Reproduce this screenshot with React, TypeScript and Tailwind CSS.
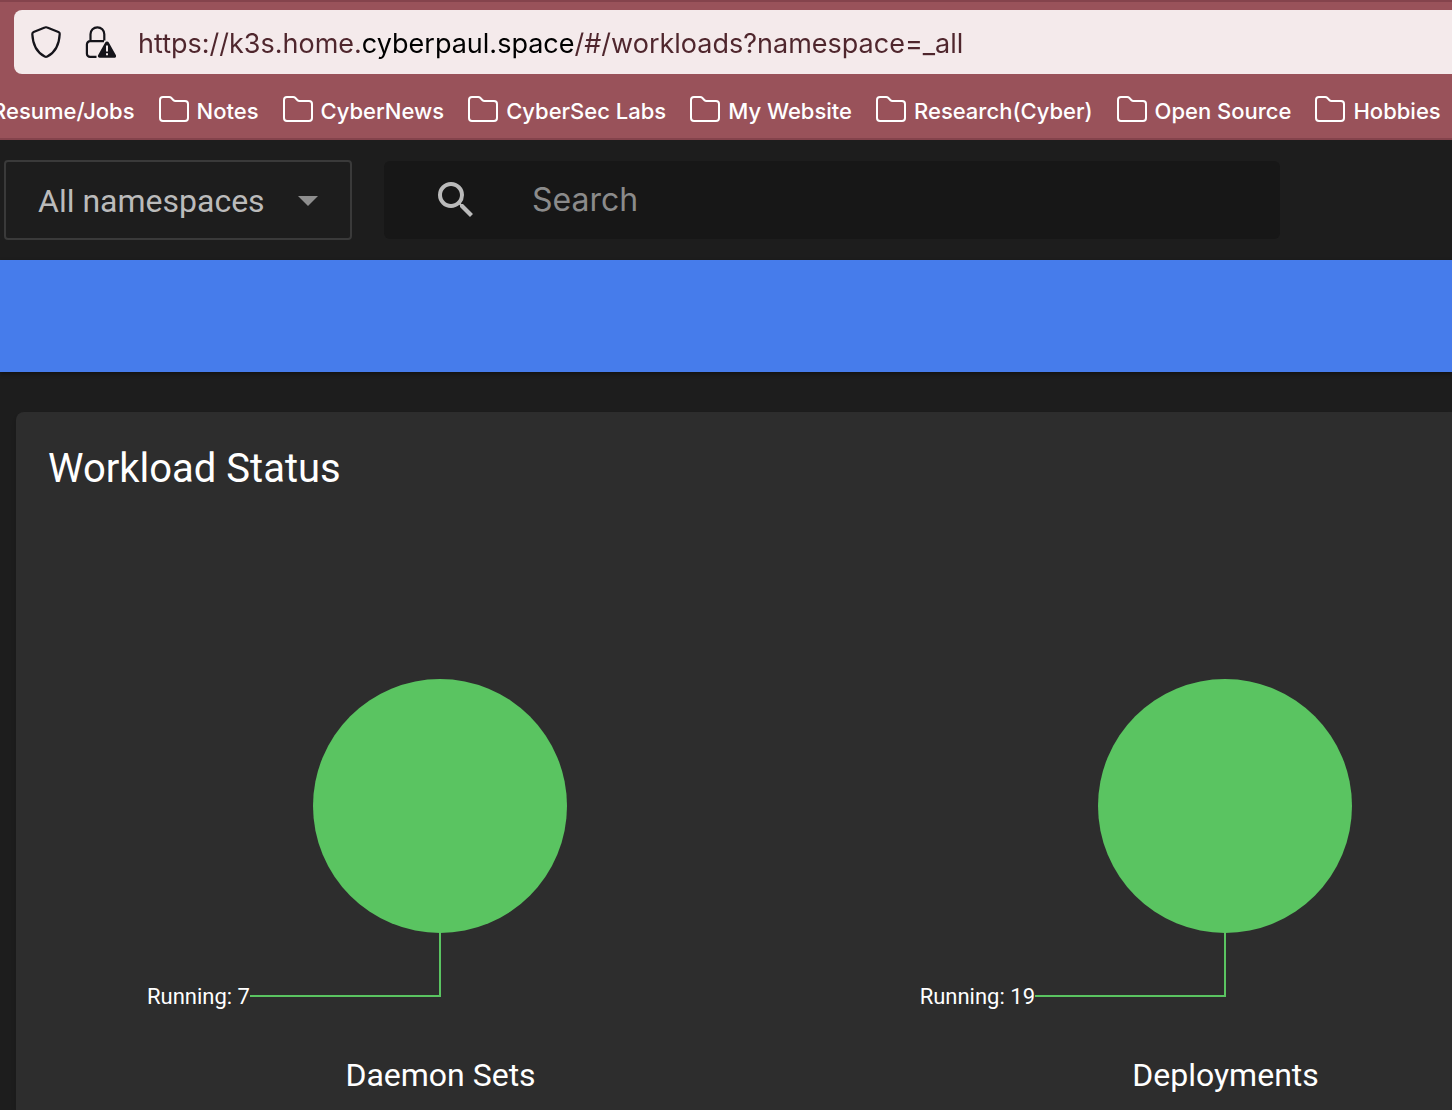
import React, { useState } from "react";

const URL_TEXT = "https://k3s.home.cyberpaul.space/#/workloads?namespace=_all";

const BOOKMARKS = [
  "Resume/Jobs",
  "Notes",
  "CyberNews",
  "CyberSec Labs",
  "My Website",
  "Research(Cyber)",
  "Open Source",
  "Hobbies",
];

const WORKLOADS = [
  { name: "Daemon Sets", running: 7 },
  { name: "Deployments", running: 19 },
];

function ShieldIcon() {
  return (
    <svg className="size-8" viewBox="0 0 32 32" fill="none" stroke="#15141a" strokeWidth="2.2" strokeLinejoin="round" aria-hidden="true">
      <path d="M14.800 1.500a3 3 0 0 1 2.400 0L28.400 6c1 .4 1.400 1.100 1.300 2.100C29.200 18.500 25 26.500 17.300 30.500c-.8.400-1.800.400-2.600 0C7 26.500 2.800 18.500 2.300 8.100c0-1 .4-1.700 1.300-2.100Z" />
    </svg>
  );
}

function LockWarningIcon() {
  return (
    <svg className="size-8" viewBox="0 0 32 32" fill="none" aria-hidden="true">
      <path d="M6.500 14.500V8.200a6.900 6.900 0 0 1 13.800 0v6.300M12.500 30.900H6.100a3.200 3.200 0 0 1-3.200-3.200v-9.300a3.200 3.200 0 0 1 3.200-3.200H20" stroke="#15141a" strokeWidth="2.200" />
      <path d="M23 15.500c.8 0 1.400.400 1.800 1.100l7 12.400c.8 1.400 0 2.700-1.500 2.700H15.700c-1.500 0-2.300-1.300-1.500-2.700l7-12.400c.4-.7 1-1.100 1.800-1.100Z" fill="#15141a" />
      <path d="M23 19.500v6M23 27.200v2" stroke="#f4eaeb" strokeWidth="2" />
    </svg>
  );
}

function FolderIcon() {
  return (
    <svg className="h-[26px] w-[30px] shrink-0" viewBox="0 0 30 26" fill="none" stroke="#ffffff" strokeWidth="2" strokeLinejoin="round" aria-hidden="true">
      <path d="M1 4a3 3 0 0 1 3-3h6.200c.8 0 1.500.300 2 .800L14.500 4.200c.5.500 1.100.800 1.900.800H26a3 3 0 0 1 3 3v14a3 3 0 0 1-3 3H4a3 3 0 0 1-3-3Z" />
    </svg>
  );
}

function WorkloadChart({ name, running }: { name: string; running: number }) {
  return (
    <figure className="flex w-[785px] shrink-0 flex-col items-center">
      <svg className="h-[491px] w-full" viewBox="0 0 785 491" role="img" aria-label={`${name}: ${running} running`}>
        <circle cx="392" cy="242" r="127" fill="#5ac461" />
        <path d="M392 368v64H202" fill="none" stroke="#5ac461" strokeWidth="2" />
        <text x="202" y="440" textAnchor="end" fill="#ffffff" fontSize="22">
          {`Running: ${running}`}
        </text>
      </svg>
      <figcaption className="text-[32px] leading-10">{name}</figcaption>
    </figure>
  );
}

export default function App() {
  const [url, setUrl] = useState(URL_TEXT);
  return (
    <div className="flex min-h-screen flex-col overflow-hidden bg-[#1d1d1d] font-[Roboto,sans-serif] text-white">
      <header className="border-y-2 border-[#84434c] bg-[#99525a] font-[Inter,sans-serif]">
        <div className="mt-2 ml-3.5 flex h-16 items-center rounded-l-lg bg-[#f4eaeb] pl-4">
          <button type="button" aria-label="Tracking protection" className="mr-[22px]">
            <ShieldIcon />
          </button>
          <button type="button" aria-label="Connection not secure" className="mr-[22px]">
            <LockWarningIcon />
          </button>
          <input
            aria-label="Address"
            value={url}
            onChange={(e) => setUrl(e.target.value)}
            className="h-full min-w-0 flex-1 bg-[linear-gradient(to_right,#4f262d_224px,#000_224px,#000_437px,#4f262d_437px)] bg-clip-text pt-0.5 text-[27px] text-transparent caret-black outline-none"
          />
        </div>
        <nav aria-label="Bookmarks" className="flex h-16 items-center gap-6 pt-1.5 text-[22px] font-medium">
          {BOOKMARKS.map((name, i) => (
            <a key={name} href="#" className={i === 0 ? "-ml-[46px] flex shrink-0 items-center gap-2" : "flex shrink-0 items-center gap-2"}>
              <FolderIcon />
              <span className="pt-1">{name}</span>
            </a>
          ))}
        </nav>
      </header>

      <div className="flex h-[120px] items-center gap-8 pl-1 text-[32px]">
        <div className="relative w-[348px] shrink-0">
          <select
            aria-label="Namespace"
            className="h-20 w-full appearance-none rounded border-2 border-[#3a3a3a] bg-transparent pt-0.5 pl-8 text-[#bbbbbb]"
          >
            <option>All namespaces</option>
          </select>
          <svg className="pointer-events-none absolute top-9 right-[34px] h-2.5 w-5" viewBox="0 0 20 10" fill="#8e8e8e" aria-hidden="true">
            <path d="M0 0h20L10 10Z" />
          </svg>
        </div>
        <div className="flex h-[78px] w-[896px] items-center rounded-md bg-[#171717] pl-12">
          <svg className="size-12 shrink-0" viewBox="0 0 24 24" fill="#bbbbbb" aria-hidden="true">
            <path d="M15.500 14h-.79l-.28-.27A6.471 6.471 0 0 0 16 9.500 6.500 6.500 0 1 0 9.500 16c1.610 0 3.090-.59 4.230-1.570l.27.28v.79l5 4.990L20.490 19l-4.990-5zm-6 0C7.010 14 5 11.990 5 9.500S7.010 5 9.500 5 14 7.010 14 9.500 11.990 14 9.500 14z" />
          </svg>
          <input
            type="search"
            aria-label="Search"
            placeholder="Search"
            className="ml-[52px] h-12 min-w-0 flex-1 bg-transparent font-[Inter,sans-serif] outline-none placeholder:text-[#8b8b8b]"
          />
        </div>
      </div>

      <div className="h-28 shrink-0 bg-[#467ceb] shadow-[0_2px_4px_rgba(0,0,0,0.4)]" />

      <main className="flex flex-1 pt-10 pl-4">
        <section className="min-w-0 flex-1 overflow-hidden rounded-tl-lg bg-[#2d2d2d] pl-8 shadow-md">
          <h1 className="flex h-28 items-center pt-0.5 text-[40px] leading-[48px]">Workload Status</h1>
          <div className="flex pt-10">
            {WORKLOADS.map((w) => (
              <WorkloadChart key={w.name} name={w.name} running={w.running} />
            ))}
          </div>
        </section>
      </main>
    </div>
  );
}
